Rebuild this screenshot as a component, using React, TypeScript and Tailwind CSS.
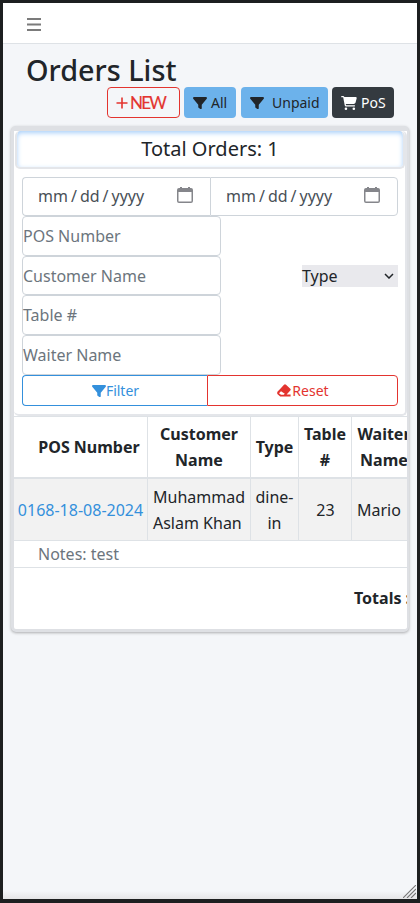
import type { ReactNode } from "react";
import { FaFilter, FaCartShopping } from "react-icons/fa6";

function DateField({ className }: { className: string }) {
  return (
    <div className={`flex h-[39px] items-center border border-[#ced4da] bg-white pb-[2px] pl-[15px] ${className}`}>
      <span className="flex flex-1 items-center whitespace-pre text-[16px] text-[#495057]">
        <span>mm</span><span className="mx-[3px]">/</span><span>dd</span><span className="mr-[3px] ml-[3px]">/</span><span>yyyy</span>
      </span>
      <svg className="mt-[-1px] h-[16px] w-[16px]" viewBox="0 0 16 16">
        <path d="M2 1h1V0h2v1h6V0h2v1h1a2 2 0 0 1 2 2v11a2 2 0 0 1-2 2H2a2 2 0 0 1-2-2V3a2 2 0 0 1 2-2ZM1.5 5v9q0 .5.5.5h12q.5 0 .5-.5V5Z" fill="#85868b" fillRule="evenodd" />
      </svg>
    </div>
  );
}

function Eraser() {
  return (
    <svg className="h-[13px] w-[14px]" viewBox="0 0 14 13">
      <path d="M7 .7q1-.9 2 0l4.3 4q.9.9 0 1.8L9.6 10.6h4v1.9H3.2L.6 10.2Q-.3 9 .6 7.6L3.1 5ZM4 7.2 2.3 8.9q-.3.4 0 .7l1.7 1.2h2.7l1.1-1Z" fill="currentColor" fillRule="evenodd" />
    </svg>
  );
}

function Field({ label, h }: { label: string; h: string }) {
  return <div className={`flex w-[199px] items-center rounded-[4px] border border-[#ced4da] bg-white text-[16px] text-[#6c757d] ${h}`}>{label}</div>;
}

function Cell({ children, className = "" }: { children: ReactNode; className?: string }) {
  return <div className={`flex shrink-0 items-center justify-center border-r border-[#dee2e6] text-center ${className}`}>{children}</div>;
}

export default function App() {
  return (
    <div className="relative flex h-[903px] w-[420px] flex-col overflow-hidden border-[3px] border-b-[4px] border-[#1d1f20] bg-[#f4f6f9] font-['Noto_Sans',sans-serif] text-[16px] leading-[26px] text-[#212529]">
      <header className="flex h-[41px] shrink-0 items-center border-b border-[#dee2e6] bg-white pl-[24px]">
        <svg className="mt-[2px] h-[13px] w-[14px]" viewBox="0 0 14 13"><path d="M0 1h14M0 6.5h14M0 12h14" stroke="#7b7b7b" strokeWidth="1.8" /></svg>
      </header>
      <h1 className="mt-[8px] h-[35px] pl-[23px] text-[28.8px] leading-[36px] font-medium">Orders List</h1>
      <div className="flex h-[31px] items-stretch text-[14px] leading-[21px]">
        <button className="ml-[104px] flex w-[73px] items-center rounded-[4px] border border-[#e3342f] pl-[8px] text-[#e3342f]">
          <svg className="h-[12px] w-[12px]" viewBox="0 0 12 12"><path d="M6 .5v11M.5 6h11" stroke="currentColor" strokeWidth="1.6" /></svg>
          <span className="ml-[2px] font-['Lato'] text-[17px] tracking-[-1.8px] [-webkit-text-stroke:0.2px]">NEW</span>
        </button>
        <button className="ml-[4px] flex w-[52px] items-center rounded-[4px] bg-[#6cb2eb] pl-[9px]">
          <FaFilter className="h-[14px] w-[14px]" /><span className="ml-[4px]">All</span>
        </button>
        <button className="ml-[5px] flex w-[87px] items-center rounded-[4px] bg-[#6cb2eb] pl-[9px]">
          <FaFilter className="h-[14px] w-[14px]" /><span className="ml-[8px]">Unpaid</span>
        </button>
        <button className="ml-[4px] flex w-[62px] items-center rounded-[4px] bg-[#343a40] pl-[9px] text-white">
          <FaCartShopping className="h-[14px] w-[16px]" /><span className="ml-[4px]">PoS</span>
        </button>
      </div>
      <main className="mt-[8px] ml-[8px] flex h-[506px] w-[398px] shrink-0 flex-col overflow-hidden rounded-[5px] border-[3px] border-t-[5px] border-r-[2px] border-[#dee0e4] bg-white shadow-[0_1px_3px_rgba(0,0,0,0.3)]">
        <section className="flex h-[285px] w-[393px] shrink-0 flex-col rounded-[5px] border-r-[2px] border-b-2 border-[#e4e6ea]">
          <div className="ml-[1px] h-[38px] w-[390px] rounded-[5px] border-2 border-t-0 border-[#e4e6ea] text-center text-[20px] leading-[36px] shadow-[inset_0_2px_5px_#a9d0fa]">Total Orders: 1</div>
          <div className="mt-[8px] ml-[8px] flex w-[376px]">
            <DateField className="w-[188px] rounded-l-[4px] border-r-0 pr-[17px]" />
            <DateField className="w-[188px] rounded-r-[4px] pr-[17px]" />
          </div>
          <div className="ml-[8px] flex w-[376px] items-center justify-between">
            <div className="flex flex-col">
              <Field label="POS Number" h="h-[40px]" />
              <Field label="Customer Name" h="h-[39px]" />
              <Field label="Table #" h="h-[40px]" />
              <Field label="Waiter Name" h="h-[40px]" />
            </div>
            <div className="mt-[-39px] flex h-[22px] w-[96px] items-center justify-between bg-[#e9e9ed] pr-[4px]">
              <span>Type</span>
              <svg className="h-[6px] w-[10px]" viewBox="0 0 10 6"><path d="m1 1 4 4 4-4" fill="none" stroke="#212529" strokeWidth="1.5" /></svg>
            </div>
          </div>
          <div className="ml-[8px] flex h-[31px] w-[376px] shrink-0 text-[14px]">
            <button className="flex w-[185px] items-center justify-center rounded-l-[4px] border border-r-0 border-[#3490dc] pl-[1px] text-[#3490dc]"><FaFilter className="h-[14px] w-[14px]" />Filter</button>
            <button className="flex w-[191px] items-center justify-center rounded-r-[4px] border border-[#e3342f] pl-[1px] text-[#e3342f]"><Eraser /><span className="ml-[1px]">Reset</span></button>
          </div>
        </section>
        <div className="flex w-[393px] shrink-0 flex-col overflow-hidden">
          <div className="flex h-[63px] shrink-0 border-t border-b-2 border-[#dee2e6] font-bold">
            <Cell className="w-[134px] pl-[17px]">POS Number</Cell>
            <Cell className="w-[103px]">Customer<br />Name</Cell>
            <Cell className="w-[48px]">Type</Cell>
            <Cell className="w-[53px]">Table<br />#</Cell>
            <div className="flex w-[64px] shrink-0 items-center justify-center text-center">Waiter<br />Name</div>
          </div>
          <div className="flex h-[62px] shrink-0 border-b border-[#dee2e6] bg-[#f2f2f2]">
            <Cell className="w-[134px] text-[#3490dc]">0168-18-08-2024</Cell>
            <Cell className="w-[103px] !text-left">Muhammad<br />Aslam Khan</Cell>
            <Cell className="w-[48px]">dine-<br />in</Cell>
            <Cell className="w-[53px] pl-[1px]">23</Cell>
            <div className="flex items-center pl-[5px]">Mario</div>
          </div>
          <div className="flex h-[27px] shrink-0 items-center border-b border-[#dee2e6] pl-[24px] text-[#6c757d]">Notes: test</div>
          <div className="flex h-[61px] shrink-0 items-center pb-[2px] pl-[340px] font-bold whitespace-nowrap">Totals :</div>
        </div>
      </main>
      <div className="absolute inset-x-0 bottom-0 h-[8px] bg-linear-to-b from-transparent to-[#e5e5e7]" />
      <svg className="absolute right-[1px] bottom-[1px] h-[13px] w-[13px]" viewBox="0 0 13 13"><path d="M0 13 13 0M4 13l9-9M8 13l5-5" stroke="#777" strokeWidth="1.1" /></svg>
    </div>
  );
}
